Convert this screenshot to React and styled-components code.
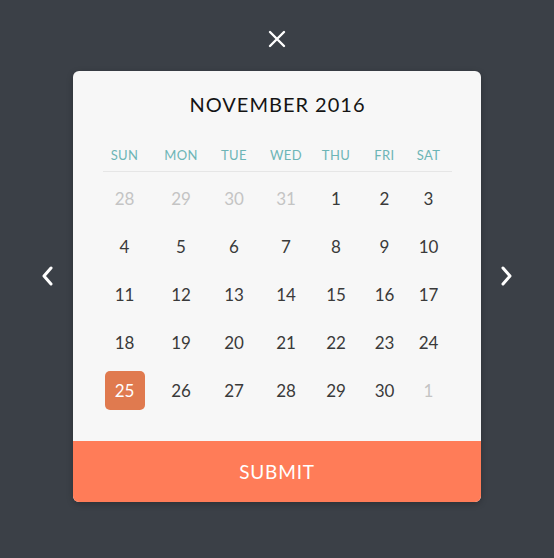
import React, {useState} from 'react';
import styled, {createGlobalStyle} from 'styled-components';

const GlobalStyle = createGlobalStyle`
  html, body {
    margin: 0;
    padding: 0;
    background: #3b4047;
  }
  body {
    font-family: Lato, "Open Sans", sans-serif;
  }
`;

const Page = styled.div`
  width: 554px;
  height: 558px;
  display: flex;
  flex-direction: column;
  align-items: center;
  padding-top: 29px;
  box-sizing: border-box;
`;

const CloseButton = styled.button`
  width: 20px;
  height: 20px;
  padding: 0;
  border: none;
  background: none;
  display: flex;
  align-items: center;
  justify-content: center;
  cursor: pointer;
`;

const Row = styled.div`
  display: flex;
  align-items: center;
  gap: 20px;
  margin-top: 22px;
`;

const Arrow = styled.button`
  width: 12px;
  height: 22px;
  padding: 0;
  border: none;
  background: none;
  margin-bottom: 21px;
  cursor: pointer;
  display: flex;
  align-items: center;
  justify-content: center;
`;

const Card = styled.div`
  width: 408px;
  background: #f7f7f7;
  border-radius: 6px;
  overflow: hidden;
  box-shadow: 0 2px 6px rgba(0, 0, 0, 0.25);
`;

const Body = styled.div`
  padding: 21px 29px 27px 30px;
`;

const Title = styled.div`
  text-align: center;
  font-size: 20px;
  line-height: 24px;
  letter-spacing: 1px;
  color: #141414;
`;

const columns = '43px 70px 36px 68px 32px 65px 23px';

const WeekHeader = styled.div`
  display: grid;
  grid-template-columns: ${columns};
  margin-top: 29px;
  padding-bottom: 6px;
  border-bottom: 1px solid #e6e6e6;
`;

const DayName = styled.div`
  text-align: center;
  font-size: 13px;
  line-height: 20px;
  letter-spacing: 0.4px;
  color: #6db5b6;
  white-space: nowrap;
  display: flex;
  justify-content: center;
`;

const Grid = styled.div`
  display: grid;
  grid-template-columns: ${columns};
  grid-auto-rows: 48px;
  margin-top: 2px;
`;

const Cell = styled.div`
  display: flex;
  align-items: center;
  justify-content: center;
`;

const DayButton = styled.button`
  flex: none;
  width: 40px;
  height: 39px;
  padding: 0;
  border: none;
  border-radius: 5px;
  font-family: inherit;
  font-size: 17px;
  color: ${p => p.$selected ? '#fff' : p.$muted ? '#c4c4c4' : '#3a3a3a'};
  background: ${p => p.$selected ? '#e07a4f' : 'transparent'};
  cursor: pointer;
`;

const Submit = styled.button`
  display: block;
  width: 100%;
  height: 61px;
  border: none;
  background: #ff7c58;
  color: #fff;
  font-family: inherit;
  font-size: 19px;
  letter-spacing: 0.8px;
  cursor: pointer;
`;

const dayNames = ['SUN', 'MON', 'TUE', 'WED', 'THU', 'FRI', 'SAT'];

function buildDays() {
    const days = [28, 29, 30, 31].map(d => ({day: d, muted: true}));
    for (let d = 1; d <= 30; d++) days.push({day: d, muted: false});
    days.push({day: 1, muted: true});
    return days;
}

function ChevronLeft() {
    return (
        <svg width="12" height="22" viewBox="0 0 12 22">
            <path d="M10 3 L3 11 L10 19" fill="none" stroke="#fff" strokeWidth="3"
                  strokeLinecap="round" strokeLinejoin="round"/>
        </svg>
    );
}

function ChevronRight() {
    return (
        <svg width="12" height="22" viewBox="0 0 12 22">
            <path d="M2 3 L9 11 L2 19" fill="none" stroke="#fff" strokeWidth="3"
                  strokeLinecap="round" strokeLinejoin="round"/>
        </svg>
    );
}

export default function App() {
    const [selected, setSelected] = useState(25);
    const days = buildDays();

    return (
        <>
            <GlobalStyle/>
            <Page>
                <CloseButton aria-label="close">
                    <svg width="18" height="18" viewBox="0 0 18 18">
                        <path d="M2 2 L16 16 M16 2 L2 16" stroke="#fff" strokeWidth="2.4" strokeLinecap="round"/>
                    </svg>
                </CloseButton>
                <Row>
                    <Arrow aria-label="previous"><ChevronLeft/></Arrow>
                    <Card>
                        <Body>
                            <Title>NOVEMBER 2016</Title>
                            <WeekHeader>
                                {dayNames.map(n => <DayName key={n}>{n}</DayName>)}
                            </WeekHeader>
                            <Grid>
                                {days.map((d, i) => (
                                    <Cell key={i}>
                                        <DayButton $muted={d.muted}
                                                   $selected={!d.muted && d.day === selected}
                                                   onClick={() => !d.muted && setSelected(d.day)}>
                                            {d.day}
                                        </DayButton>
                                    </Cell>
                                ))}
                            </Grid>
                        </Body>
                        <Submit>SUBMIT</Submit>
                    </Card>
                    <Arrow aria-label="next"><ChevronRight/></Arrow>
                </Row>
            </Page>
        </>
    );
}
